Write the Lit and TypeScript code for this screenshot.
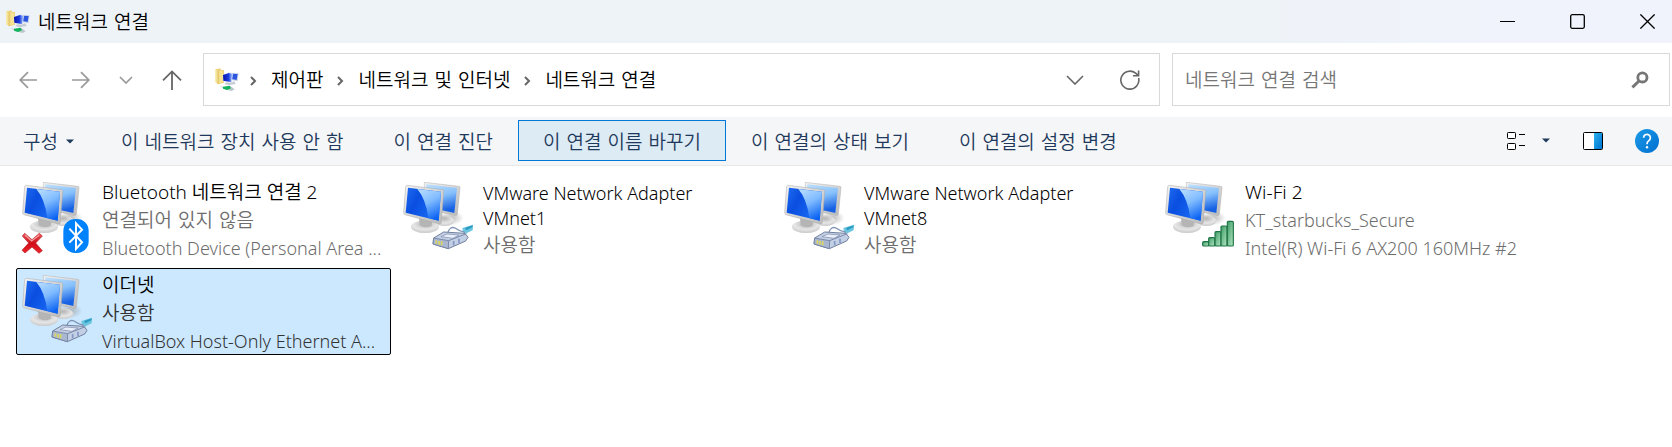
import { LitElement, html, css, svg, nothing } from "lit";
import { customElement, property, state } from "lit/decorators.js";

type Badge = "bluetooth" | "plug" | "signal";

interface Connection {
  name: string;
  status: string;
  device?: string;
  badge: Badge;
  disconnected?: boolean;
}

const connections: Connection[] = [
  { name: "Bluetooth 네트워크 연결 2", status: "연결되어 있지 않음", device: "Bluetooth Device (Personal Area ...", badge: "bluetooth", disconnected: true },
  { name: "VMware Network Adapter VMnet1", status: "사용함", badge: "plug" },
  { name: "VMware Network Adapter VMnet8", status: "사용함", badge: "plug" },
  { name: "Wi-Fi 2", status: "KT_starbucks_Secure", device: "Intel(R) Wi-Fi 6 AX200 160MHz #2", badge: "signal" },
  { name: "이더넷", status: "사용함", device: "VirtualBox Host-Only Ethernet A...", badge: "plug" },
];

const commands = ["이 네트워크 장치 사용 안 함", "이 연결 진단", "이 연결 이름 바꾸기", "이 연결의 상태 보기", "이 연결의 설정 변경"];

const path = ["제어판", "네트워크 및 인터넷", "네트워크 연결"];

const hasHangul = (text: string) => /[가-힣]/.test(text);

const folderIcon = html`<svg class="folder" width="24" height="24" viewBox="0 0 72 72" aria-hidden="true">
  <defs>
    <linearGradient id="fold" x1="0" x2="1"><stop offset="0" stop-color="#fdf3b5" /><stop offset="1" stop-color="#e3c463" /></linearGradient>
    <linearGradient id="scr" x1="0" x2="1"><stop offset="0" stop-color="#0a12a8" /><stop offset="0.6" stop-color="#1c3fe0" /><stop offset="1" stop-color="#a9c6ff" /></linearGradient>
  </defs>
  <path d="M1 4 L16 1 L18 6 L27 6 L27 44 L9 49 L1 42Z" fill="#ecd27c" />
  <path d="M1 4 L11 8 L11 49 L1 43Z" fill="url(#fold)" />
  <path d="M13 9 L24 8 L24 42 L13 46Z" fill="#f7e391" />
  <path d="M44 14 L71 15 L68 40 L46 36Z" fill="#cfd8ea" />
  <path d="M47 17 L68 18 L65 36 L49 33Z" fill="#2d56e0" />
  <path d="M23 21 L42 13 L54 17 L50 44 L24 40Z" fill="#dbe2f0" />
  <path d="M24 21 L42 15 L52 18 L48 42 L25 38Z" fill="url(#scr)" />
  <path d="M34 43 L46 44 L58 40 L62 48 L40 52 L28 48Z" fill="#c6ccd6" />
  <path d="M13 54 L30 58 L46 54 L59 64 L50 69 L30 64Z" fill="#b9c9cb" />
  <path d="M24 56 L44 53 L48 61 L36 66 L24 62Z" fill="#12b35c" />
</svg>`;

const plugBadge = svg`
  <path d="M214 174 L246 164 L245 181 L226 190 L216 186Z" fill="#6cc6e0"/>
  <path d="M222 174 L245 166 L244 172 L226 181Z" fill="#2a9cc4"/>
  <path d="M171 186 Q178 168 192 174 Q205 184 222 187" fill="none" stroke="#7f92b4" stroke-width="4"/>
  <path d="M128 204 L158 186 L222 190 L231 202 L224 213 L172 236 L126 222Z" fill="#c3cfe4" stroke="#71809e" stroke-width="3" stroke-linejoin="round"/>
  <path d="M128 204 L173 212 L172 236 L126 222Z" fill="#a9b7d1" stroke="#71809e" stroke-width="2.5"/>
  <path d="M173 212 L226 191" stroke="#7888a8" stroke-width="3" fill="none"/>
  <path d="M168 192 L204 195 L186 205 L150 200Z" fill="#e9effa" stroke="#7888a8" stroke-width="2"/>
  <path d="M136 211 V221 M144 213 V224 M152 214 V226" stroke="#ddd65e" stroke-width="5"/>
  <path d="M188 213 V226 M204 206 V219" stroke="#8398c6" stroke-width="5"/>`;

const bluetoothBadge = svg`
  <rect x="160" y="147" width="76" height="102" rx="35" fill="#0082fc"/>
  <path d="M178 176 L216 217 L198 237 V160 L216 179 L178 218" fill="none" stroke="#fff" stroke-width="6"/>`;

const crossBadge = svg`
  <path d="M44 190 L66 209 L88 190 L97 198 L77 219 L97 242 L87 250 L66 231 L45 249 L36 241 L56 219 L37 198Z" fill="url(#cross)" stroke="#b3222a" stroke-width="2" stroke-linejoin="round"/>
  <path d="M45 195 L65 213 L88 195" fill="none" stroke="#f59a9a" stroke-width="4"/>`;

const signalBars = [
  { x: 149, y: 215 },
  { x: 167, y: 203 },
  { x: 186, y: 185 },
  { x: 204, y: 168 },
  { x: 223, y: 154 },
];

const signalBadge = svg`${signalBars.map(
  ({ x, y }) => svg`<rect x=${x} y=${y} width="18" height=${228 - y} rx="3" fill="url(#sig)" stroke="#1f7446" stroke-width="3.5"/>`
)}`;

@customElement("network-icon")
export class NetworkIcon extends LitElement {
  @property() badge: Badge = "plug";
  @property({ type: Boolean }) disconnected = false;

  static styles = css`
    :host { display: block; }
    svg { display: block; }
  `;

  render() {
    return html`<svg width="75" height="75" viewBox="30 27 225 225" aria-hidden="true">
      <defs>
        <linearGradient id="front" x1="0" y1="0" x2="1" y2="0.5"><stop offset="0" stop-color="#1e6cf0" /><stop offset="0.4" stop-color="#0a4ee0" /><stop offset="1" stop-color="#1a6df5" /></linearGradient>
        <linearGradient id="shine" x1="0.2" y1="0" x2="0.6" y2="1"><stop offset="0" stop-color="#b4dbff" /><stop offset="0.45" stop-color="#81bcff" /><stop offset="1" stop-color="#0b63f3" /></linearGradient>
        <linearGradient id="back" x1="0" y1="0" x2="0.3" y2="1"><stop offset="0" stop-color="#bfe0fc" /><stop offset="0.5" stop-color="#86c0fb" /><stop offset="1" stop-color="#1762e4" /></linearGradient>
        <linearGradient id="case" x1="0" y1="0" x2="1" y2="1"><stop offset="0" stop-color="#f3f3f3" /><stop offset="1" stop-color="#b9b9b9" /></linearGradient>
        <linearGradient id="cross" x1="0" y1="0" x2="0" y2="1"><stop offset="0" stop-color="#e85a5e" /><stop offset="0.5" stop-color="#cf0f18" /><stop offset="1" stop-color="#f0232b" /></linearGradient>
        <linearGradient id="sig" x1="0" y1="0" x2="1" y2="1"><stop offset="0" stop-color="#3c9c65" /><stop offset="1" stop-color="#b5e6c3" /></linearGradient>
        <radialGradient id="stand" cx="0.5" cy="0.3" r="0.7"><stop offset="0" stop-color="#b4b4b4" /><stop offset="0.6" stop-color="#e6e6e6" /><stop offset="1" stop-color="#c9c9c9" /></radialGradient>
        <radialGradient id="shade"><stop offset="0" stop-color="#9a9a9a" stop-opacity="0.7" /><stop offset="1" stop-color="#9a9a9a" stop-opacity="0" /></radialGradient>
      </defs>
      <ellipse cx="180" cy="144" rx="38" ry="22" fill="url(#shade)" />
      <ellipse cx="160" cy="152" rx="30" ry="16" fill="url(#stand)" />
      <path d="M100 37 L204 49 Q208 50 207 54 L199 133 Q198 137 194 137 L100 115Z" fill="url(#case)" stroke="#b0b0b0" stroke-width="1.5" />
      <path d="M106 43 L198 54 L190 129 L106 110Z" fill="url(#back)" />
      <ellipse cx="102" cy="170" rx="42" ry="19" fill="url(#stand)" />
      <path d="M84 142 L124 150 L122 168 Q102 176 86 166Z" fill="#b5b5b5" />
      <path d="M49 46 L154 59 Q159 60 158 65 L151 157 Q150 163 145 162 L42 134 Q37 132 38 127 L44 50 Q45 46 49 46Z" fill="url(#case)" stroke="#a9a9a9" stroke-width="1.5" />
      <path d="M51 53 L150 65 L143 152 L44 128Z" fill="url(#front)" />
      <path d="M79 57 L150 65 L143 152 L112 144 Q105 88 79 57Z" fill="url(#shine)" />
      ${this.badge === "plug" ? plugBadge : this.badge === "bluetooth" ? bluetoothBadge : signalBadge}
      ${this.disconnected ? crossBadge : nothing}
    </svg>`;
  }
}

@customElement("app-root")
export class AppRoot extends LitElement {
  @state() private selected = 4;

  static styles = css`
    :host {
      display: block;
      min-height: 100vh;
      background: #fff;
      color: #000;
      font-family: "Noto Sans", "Noto Sans CJK KR", sans-serif;
      font-size: 19px;
      font-weight: 350;
      line-height: 28px;
    }
    * { box-sizing: border-box; }
    svg { display: block; flex: none; }
    button, input {
      font: inherit;
      color: inherit;
      background: none;
      border: 0;
      padding: 0;
      margin: 0;
      border-radius: 0;
    }
    button { display: flex; align-items: center; justify-content: center; }
    h1 { margin: 0; font: inherit; }
    .titlebar {
      display: flex;
      align-items: center;
      height: 43px;
      padding-left: 6px;
      gap: 8px;
      background: linear-gradient(90deg, #eef3f8 75%, #f0f3fb 90%);
    }
    .titlebar h1 { flex: 1; }
    .korean { font-family: "DejaVu Sans", "Noto Sans CJK KR", sans-serif; }
    .controls { display: flex; gap: 20px; }
    .controls button { width: 50px; height: 40px; }
    .nav {
      display: flex;
      align-items: center;
      padding: 10px 2px 11px 1px;
      color: #999;
    }
    .nav-button { width: 53px; height: 40px; }
    .recent { width: 37px; }
    .up { width: 55px; color: #666; margin-right: 4px; }
    .address, .search {
      display: flex;
      align-items: center;
      height: 53px;
      border: 1px solid #d9d9d9;
      background: #fff;
    }
    .address { flex: 944 1 0; padding-left: 11px; color: #666; margin-right: 12px; }
    .crumbs { display: flex; align-items: center; flex: 1; margin: 0; padding: 0; list-style: none; white-space: nowrap; }
    .crumbs li { display: flex; align-items: center; }
    .crumbs svg { margin: 2px 12px 0 11px; }
    .crumbs li:first-child svg { margin-left: 8px; }
    .crumbs a { color: #000; text-decoration: none; }
    .history { width: 52px; height: 51px; }
    .refresh { width: 58px; height: 51px; }
    .search { flex: 464 1 0; padding: 0 20px 0 12px; color: #767676; }
    .search input { flex: 1; min-width: 0; outline: 0; }
    .search input::placeholder { color: #767676; opacity: 1; }
    .toolbar {
      display: flex;
      align-items: center;
      height: 49px;
      padding-right: 13px;
      padding-bottom: 1px;
      background: #f5f6f7;
      border-bottom: 1px solid #e8e9ea;
      color: #1e395b;
      white-space: nowrap;
    }
    .command { height: 41px; padding: 2px 24px 0; border: 1px solid transparent; }
    .command.active { background: #dcebf4; border-color: #0078d7; }
    .organize { gap: 8px; padding-left: 22px; padding-right: 21px; }
    .spacer { flex: 1; }
    .view { gap: 16px; }
    .pane { margin: 0 32px 0 33px; }
    .list {
      display: grid;
      grid-template-columns: repeat(auto-fill, 375px);
      gap: 6px;
      margin: 0;
      padding: 9px 16px;
      list-style: none;
    }
    .item {
      width: 100%;
      height: 87px;
      justify-content: flex-start;
      align-items: center;
      gap: 7px;
      padding: 3px 12px 0 3px;
      border: 1px solid transparent;
      border-radius: 2px;
      text-align: left;
      font-size: 18px;
    }
    .item network-icon { align-self: flex-start; }
    .item.selected { background: #cce8ff; border-color: #000; }
    .label { flex: 1; min-width: 0; color: #6d6d6d; }
    .selected .label { color: #333; }
    .line { display: block; white-space: nowrap; }
    .line.korean { font-size: 19px; }
    .name { display: block; color: #000; font-size: 19px; }
    .wrapped .name { font-size: 18px; line-height: 25px; max-width: 250px; }
  `;

  private crumbChevron() {
    return html`<svg width="12" height="12" viewBox="0 0 12 12" fill="none" stroke="#666" stroke-width="2" aria-hidden="true"><path d="M4 2 L8 6 L4 10" /></svg>`;
  }

  private caret() {
    return html`<svg width="8" height="5" viewBox="0 0 8 5" aria-hidden="true"><path d="M0 0.5 H8 L4 4.5Z" fill="#1e395b" /></svg>`;
  }

  render() {
    return html`
      <header class="titlebar korean">
        ${folderIcon}
        <h1>네트워크 연결</h1>
        <div class="controls">
          <button aria-label="최소화"><svg width="15" height="15" viewBox="0 0 15 15" fill="none" stroke="#000"><path d="M0 7.5 H15" /></svg></button>
          <button aria-label="최대화"><svg width="15" height="15" viewBox="0 0 15 15" fill="none" stroke="#000" stroke-width="1.3"><rect x="0.7" y="0.7" width="13.6" height="13.6" rx="1.5" /></svg></button>
          <button aria-label="닫기"><svg width="15" height="15" viewBox="0 0 15 15" fill="none" stroke="#000" stroke-width="1.3"><path d="M0.4 0.4 L14.6 14.6 M14.6 0.4 L0.4 14.6" /></svg></button>
        </div>
      </header>

      <nav class="nav korean">
        <button class="nav-button" aria-label="뒤로"><svg width="18" height="18" viewBox="0 0 18 18" fill="none" stroke="currentColor" stroke-width="1.7"><path d="M18 9 H1.5 M9 1.2 L1.2 9 L9 16.8" /></svg></button>
        <button class="nav-button" aria-label="앞으로"><svg width="18" height="18" viewBox="0 0 18 18" fill="none" stroke="currentColor" stroke-width="1.7"><path d="M0 9 H16.5 M9 1.2 L16.8 9 L9 16.8" /></svg></button>
        <button class="nav-button recent" aria-label="최근 위치"><svg width="14" height="8" viewBox="0 0 14 8" fill="none" stroke="currentColor" stroke-width="1.7"><path d="M1 1 L7 7 L13 1" /></svg></button>
        <button class="nav-button up" aria-label="위로"><svg width="20" height="20" viewBox="0 0 20 20" fill="none" stroke="currentColor" stroke-width="1.8"><path d="M10 20 V2 M1 10.4 L10 1.4 L19 10.4" /></svg></button>
        <div class="address">
          ${folderIcon}
          <ol class="crumbs">
            ${path.map((p) => html`<li>${this.crumbChevron()}<a href="#">${p}</a></li>`)}
          </ol>
          <button class="history" aria-label="이전 위치"><svg width="18" height="10" viewBox="0 0 18 10" fill="none" stroke="currentColor" stroke-width="1.6"><path d="M1 1 L9 9 L17 1" /></svg></button>
          <button class="refresh" aria-label="새로 고침"><svg width="20" height="20" viewBox="0 0 20 20" fill="none" stroke="currentColor" stroke-width="1.6"><path d="M18.6 8 A9 9 0 1 1 15.6 3.2 L18.4 5.6 M18.6 0.4 V5.8 H13" /></svg></button>
        </div>
        <label class="search">
          <input type="text" placeholder="네트워크 연결 검색" aria-label="네트워크 연결 검색" />
          <svg width="18" height="18" viewBox="0 0 18 18" fill="none" stroke="#767676" aria-hidden="true"><circle cx="11.4" cy="6.4" r="4.6" stroke-width="2.8" /><path d="M8 10 L1.4 16.4" stroke-width="3" /></svg>
        </label>
      </nav>

      <div class="toolbar korean" role="toolbar">
        <button class="command organize">구성 ${this.caret()}</button>
        ${commands.map((c, i) => html`<button class="command ${i === 2 ? "active" : ""}">${c}</button>`)}
        <span class="spacer"></span>
        <button class="view" aria-label="보기 변경">
          <svg width="20" height="20" viewBox="0 0 20 20" fill="none" stroke="#000"><rect x="1.5" y="1.5" width="8" height="6" rx="0.8" fill="#fff" /><rect x="1.5" y="12.5" width="8" height="6" rx="0.8" fill="#fff" /><path d="M13 3.5 H19 M13 14.5 H19" /></svg>
          ${this.caret()}
        </button>
        <button class="pane" aria-label="미리 보기 창">
          <svg width="20" height="18" viewBox="0 0 20 18">
            <defs><linearGradient id="pane" x1="0" y1="0" x2="1" y2="1"><stop offset="0" stop-color="#2ab2ee" /><stop offset="1" stop-color="#0072d0" /></linearGradient></defs>
            <rect x="0.5" y="0.5" width="19" height="17" rx="1" fill="#fff" /><path d="M11 1 H19 V17 H11Z" fill="url(#pane)" /><rect x="0.5" y="0.5" width="19" height="17" rx="1" fill="none" stroke="#000" />
          </svg>
        </button>
        <button aria-label="도움말">
          <svg width="24" height="24" viewBox="0 0 24 24">
            <defs><linearGradient id="help" x1="0" y1="0" x2="1" y2="1"><stop offset="0" stop-color="#1d9be8" /><stop offset="1" stop-color="#006fd0" /></linearGradient></defs>
            <circle cx="12" cy="12" r="12" fill="url(#help)" />
            <path d="M8.6 8.8 A3.4 3.4 0 1 1 13.8 11.6 Q12 12.8 12 15.2" fill="none" stroke="#fff" stroke-width="1.7" /><circle cx="12" cy="18.2" r="1.2" fill="#fff" />
          </svg>
        </button>
      </div>

      <ul class="list">
        ${connections.map(
          (c, i) => html`<li>
            <button class="item ${i === this.selected ? "selected" : ""} ${c.device ? "" : "wrapped"}" @click=${() => (this.selected = i)}>
              <network-icon .badge=${c.badge} .disconnected=${!!c.disconnected}></network-icon>
              <span class="label">
                <span class="name">${c.name}</span>
                <span class="line ${hasHangul(c.status) ? "korean" : ""}">${c.status}</span>
                ${c.device ? html`<span class="line">${c.device}</span>` : nothing}
              </span>
            </button>
          </li>`
        )}
      </ul>
    `;
  }
}
